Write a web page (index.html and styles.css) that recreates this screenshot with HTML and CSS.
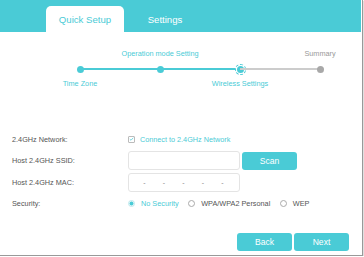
FILE: index.html
```html
<!DOCTYPE html>
<html lang="en">
<head>
  <meta charset="UTF-8">
  <meta name="viewport" content="width=device-width, initial-scale=1.0">
  <title>Quick Setup</title>
  <link rel="stylesheet" href="styles.css">
</head>
<body>
  <div class="frame">
    <div class="header">
      <div class="tab active">Quick Setup</div>
      <div class="tab">Settings</div>
    </div>

    <div class="steps">
      <div class="step done">
        <span class="step-label"></span>
        <span class="step-point"><span class="dot"></span></span>
        <span class="step-label">Time Zone</span>
      </div>
      <div class="step done">
        <span class="step-label">Operation mode Setting</span>
        <span class="step-point"><span class="dot"></span></span>
        <span class="step-label"></span>
      </div>
      <div class="step done current">
        <span class="step-label"></span>
        <span class="step-point"><span class="ring"><span class="dot"></span></span></span>
        <span class="step-label">Wireless Settings</span>
      </div>
      <div class="step">
        <span class="step-label">Summary</span>
        <span class="step-point"><span class="dot"></span></span>
        <span class="step-label"></span>
      </div>
    </div>

    <div class="form">
      <div class="form-row">
        <div class="form-label">2.4GHz Network:</div>
        <label class="check-item">
          <span class="checkbox">
            <svg viewBox="0 0 8 8" width="6" height="6"><path d="M1.3 4.2 L3.2 6 L6.8 2" fill="none" stroke="#4acbd6" stroke-width="1.2"/></svg>
          </span>
          Connect to 2.4GHz Network
        </label>
      </div>
      <div class="form-row">
        <div class="form-label">Host 2.4GHz SSID:</div>
        <div class="input"></div>
        <button class="btn scan">Scan</button>
      </div>
      <div class="form-row">
        <div class="form-label">Host 2.4GHz MAC:</div>
        <div class="input mac">
          <span>-</span><span>-</span><span>-</span><span>-</span><span>-</span>
        </div>
      </div>
      <div class="form-row">
        <div class="form-label">Security:</div>
        <div class="radio-group">
          <label class="radio-item selected"><span class="radio"></span>No Security</label>
          <label class="radio-item"><span class="radio"></span>WPA/WPA2 Personal</label>
          <label class="radio-item"><span class="radio"></span>WEP</label>
        </div>
      </div>
    </div>

    <div class="footer">
      <button class="btn">Back</button>
      <button class="btn">Next</button>
    </div>
  </div>
</body>
</html>
```

FILE: styles.css
```css
* {
  margin: 0;
  padding: 0;
  box-sizing: border-box;
}

body {
  font-family: "Liberation Sans", Arial, sans-serif;
  background: white;
  color: #555;
}

.frame {
  width: 363px;
  height: 256px;
  border-right: 1px solid #999;
  border-bottom: 1px solid #999;
  box-shadow: 1px 1px 1px rgba(0, 0, 0, 0.12);
}

/* tabs */
.header {
  background: #4acbd6;
  height: 32px;
  width: 361px;
  padding: 6px 0 0 46px;
  display: flex;
  gap: 2px;
}

.tab {
  width: 78px;
  height: 26px;
  display: flex;
  align-items: center;
  justify-content: center;
  font-size: 9.6px;
  color: white;
  border-radius: 5px 5px 0 0;
}

.tab.active {
  background: white;
  color: #4acbd6;
}

/* progress steps */
.steps {
  margin: 16px 0 0 40px;
  display: grid;
  grid-template-columns: repeat(4, 80px);
}

.step {
  display: grid;
  grid-template-rows: 12px 18px 12px;
  justify-items: center;
}

.step-label {
  font-size: 7.3px;
  line-height: 12px;
  white-space: nowrap;
  color: #4acbd6;
}

.step:last-child .step-label {
  color: #999;
}

.step-point {
  position: relative;
  width: 100%;
  display: flex;
  align-items: center;
  justify-content: center;
}

.step + .step .step-point::before {
  content: "";
  position: absolute;
  left: -50%;
  top: 8px;
  width: 100%;
  height: 2px;
  background: #ccc;
}

.step.done + .step.done .step-point::before {
  background: #4acbd6;
}

.dot {
  position: relative;
  width: 7px;
  height: 7px;
  border-radius: 50%;
  background: #4acbd6;
}

.step:last-child .dot {
  background: #a8a8a8;
}

.ring {
  position: relative;
  padding: 1px;
  border: 1px dashed #4acbd6;
  border-radius: 50%;
  background: white;
  display: flex;
}

/* form */
.form {
  margin-top: 39px;
  padding-left: 12px;
  display: flex;
  flex-direction: column;
  gap: 1.5px;
}

.form-row {
  height: 20px;
  display: flex;
  align-items: center;
}

.form-label {
  width: 116px;
  font-size: 7.3px;
  color: #555;
}

.check-item {
  display: flex;
  align-items: center;
  font-size: 7.25px;
  color: #4acbd6;
}

.checkbox {
  width: 7px;
  height: 7px;
  border: 1px solid #bbb;
  border-radius: 1px;
  margin-right: 5px;
  display: flex;
  align-items: center;
  justify-content: center;
}

.input {
  width: 112px;
  height: 19px;
  border: 1px solid #e4e4e4;
  border-radius: 3px;
  background: white;
}

.input.mac {
  display: flex;
  align-items: center;
  padding-left: 14px;
  gap: 16.5px;
  font-size: 7px;
  color: #888;
}

.input.mac span {
  width: 3px;
  text-align: center;
}

.btn {
  font-family: inherit;
  border: none;
  background: #4acbd6;
  color: white;
  font-size: 8.6px;
  border-radius: 3px;
  height: 18px;
  width: 55px;
}

.scan {
  margin-left: 2px;
}

.radio-group {
  display: flex;
  align-items: center;
  gap: 9.5px;
}

.radio-item {
  display: flex;
  align-items: center;
  font-size: 7.3px;
  color: #555;
}

.radio-item.selected {
  color: #4acbd6;
}

.radio {
  width: 7px;
  height: 7px;
  border: 1px solid #aaa;
  border-radius: 50%;
  margin-right: 6px;
}

.radio-item.selected .radio {
  border-color: #bfe9ee;
  background: radial-gradient(circle, #4acbd6 0 1.7px, #dff5f7 2.2px);
}

/* buttons */
.footer {
  margin-top: 19.5px;
  width: 362px;
  padding-right: 13px;
  display: flex;
  justify-content: flex-end;
  gap: 2px;
}
```
